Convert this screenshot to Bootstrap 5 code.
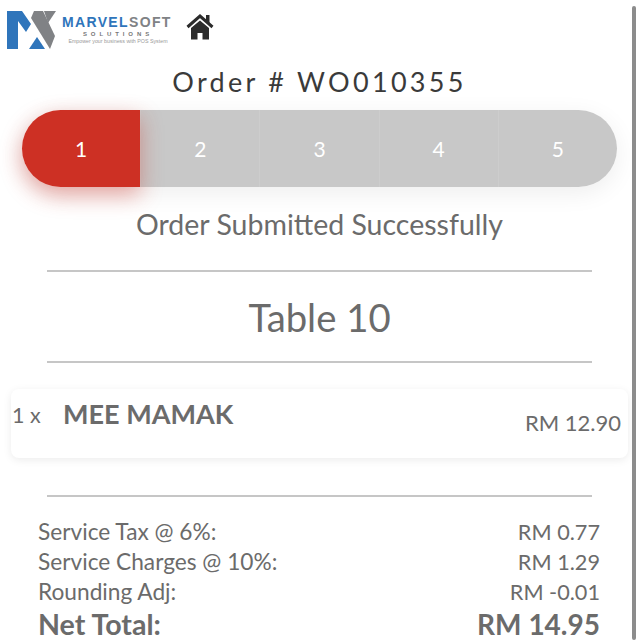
<!DOCTYPE html>
<html lang="en">
<head>
    <meta charset="UTF-8">
    <meta name="viewport" content="width=device-width, initial-scale=1.0">
    <title>Order Status</title>
    <link href="https://cdn.jsdelivr.net/npm/bootstrap@5.3.3/dist/css/bootstrap.min.css" rel="stylesheet">
    <style>
        html, body { height: 640px; overflow: hidden; }
        body { font-family: "Lato", "Open Sans", sans-serif; color: #6b6b6b; background: #fff; position: relative; }
        .page-wrap { width: 639px; }
        .top-bar { height: 52px; padding: 11px 0 0 7px; }
        .logo-words { width: 112px; margin-left: 6px; padding-top: 4px; line-height: 1; font-family: "Liberation Sans", sans-serif; }
        .logo-name { font-size: 14px; font-weight: 700; letter-spacing: 1.35px; color: #2f75bb; white-space: nowrap; }
        .logo-name span { color: #808285; }
        .logo-sub { font-size: 6px; font-weight: 700; letter-spacing: 3.9px; color: #777; text-align: center; margin-top: 2px; }
        .logo-tag { font-size: 5.3px; color: #999; text-align: center; margin-top: 2px; white-space: nowrap; }
        .home-icon { margin: 3px 0 0 12px; }
        .order-title { font-size: 27px; font-weight: 400; letter-spacing: 3.3px; color: #3a3a3a; text-align: center; margin: 12px 0 0; line-height: 36px; }
        .step-bar { display: flex; height: 77px; margin: 10px 22px 0; border-radius: 39px; box-shadow: 0 6px 24px rgba(0,0,0,.07); }
        .step-item { flex: 1; display: flex; align-items: center; justify-content: center; background: #c8c8c8; color: #fff; font-size: 21px; }
        .step-item + .step-item { border-left: 1px solid #cdcdcd; }
        .step-item:last-child { border-radius: 0 39px 39px 0; }
        .step-active { background: #cd3024; border-radius: 39px 0 0 39px; box-shadow: 0 8px 22px rgba(205,48,36,.4); position: relative; }
        .step-status { font-size: 28.5px; text-align: center; line-height: 36px; margin: 19px 0 0; }
        .rule-line { height: 2px; background: #c6c6c6; margin: 0 47px; }
        .status-rule { margin-top: 28px; }
        .table-name { font-size: 38.3px; text-align: center; line-height: 48px; margin: 21px 0 20px; }
        .item-card { height: 69px; margin: 26px 11px 37px; border: 0; border-radius: 8px; box-shadow: 0 2px 8px rgba(0,0,0,.08); padding: 8px 7px 0 1px; }
        .item-qty { font-size: 21.5px; width: 51px; line-height: 36px; }
        .item-name { font-size: 27px; font-weight: 700; line-height: 34px; }
        .item-price { font-size: 22px; margin-top: 8px; line-height: 36px; }
        .total-box { padding: 20px 39px 0 38px; font-size: 22.7px; line-height: 30px; }
        .total-box span + span { font-size: 21.7px; }
        .net-row { font-size: 28.6px; font-weight: 700; line-height: 34px; }
        .total-box .net-row span + span { font-size: 28px; }
        .scroll-thumb { position: absolute; top: 6px; right: 4px; bottom: 0; width: 4px; border-radius: 2px; background: #8c8c8c; }
    </style>
</head>
<body>
<div class="page-wrap">
    <div class="top-bar d-flex align-items-start">
        <svg width="49" height="39" viewBox="0 0 49 39">
            <path d="M0 0H15L24 13L19 21L11 10V38H0Z" fill="#2f75bb"/>
            <path d="M24 7L27 0H36L48 25L43 38Z" fill="#808285"/>
            <path d="M37 0H49L41 12Z" fill="#808285"/>
            <path d="M22 38L30 26L38 38Z" fill="#2f75bb"/>
        </svg>
        <div class="logo-words">
            <div class="logo-name">MARVEL<span>SOFT</span></div>
            <div class="logo-sub">SOLUTIONS</div>
            <div class="logo-tag">Empower your business with POS System</div>
        </div>
        <svg class="home-icon" width="28" height="26" viewBox="0 0 28 26">
            <path d="M1.5 13L14 2L26.5 13" fill="none" stroke="#2b2b2b" stroke-width="3"/>
            <path d="M20 1H23.5V9H20Z" fill="#2b2b2b"/>
            <path d="M14 6.5L23 14V25.5H16.5V19H11.5V25.5H5V14Z" fill="#2b2b2b"/>
        </svg>
    </div>

    <h1 class="order-title">Order # WO010355</h1>

    <div class="step-bar">
        <div class="step-item step-active">1</div>
        <div class="step-item">2</div>
        <div class="step-item">3</div>
        <div class="step-item">4</div>
        <div class="step-item">5</div>
    </div>

    <p class="step-status">Order Submitted Successfully</p>
    <div class="rule-line status-rule"></div>
    <div class="table-name">Table 10</div>
    <div class="rule-line"></div>

    <div class="card item-card flex-row justify-content-between align-items-start">
        <div class="d-flex align-items-start">
            <div class="item-qty">1 x</div>
            <div class="item-name">MEE MAMAK</div>
        </div>
        <div class="item-price">RM 12.90</div>
    </div>

    <div class="rule-line"></div>

    <div class="total-box">
        <div class="d-flex justify-content-between"><span>Service Tax @ 6%:</span><span>RM 0.77</span></div>
        <div class="d-flex justify-content-between"><span>Service Charges @ 10%:</span><span>RM 1.29</span></div>
        <div class="d-flex justify-content-between"><span>Rounding Adj:</span><span>RM -0.01</span></div>
        <div class="d-flex justify-content-between net-row"><span>Net Total:</span><span>RM 14.95</span></div>
    </div>
</div>
<div class="scroll-thumb"></div>
<script src="https://cdn.jsdelivr.net/npm/bootstrap@5.3.3/dist/js/bootstrap.bundle.min.js"></script>
</body>
</html>
